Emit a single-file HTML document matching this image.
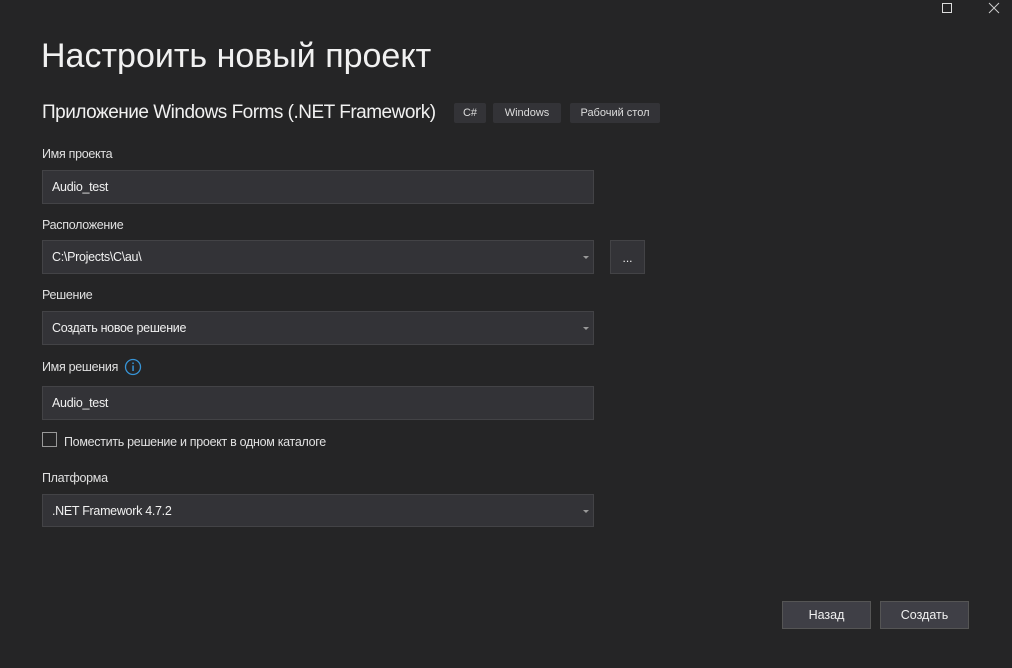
<!DOCTYPE html>
<html><head><meta charset="utf-8"><style>
*{margin:0;padding:0;box-sizing:border-box}
body{width:1012px;height:668px;background:#252526;color:#f1f1f1;font-family:"Liberation Sans",sans-serif;position:relative;overflow:hidden}
.a{position:absolute;white-space:nowrap}
.lbl{font-size:12.5px;color:#e0e0e0;letter-spacing:-0.3px}
.inp{position:absolute;left:42px;width:552px;height:34px;background:#333337;border:1px solid #434346;font-size:12.5px;color:#f1f1f1;padding:0 0 0 9px;line-height:32px;letter-spacing:-0.3px}
.arr{position:absolute;right:4px;top:15px;width:0;height:0;border-left:3px solid transparent;border-right:3px solid transparent;border-top:3px solid #999}
.tag{position:absolute;top:103px;height:20px;background:#333337;border-radius:2px;font-size:11px;line-height:20px;text-align:center;color:#ddd}
.btn{position:absolute;top:601px;width:89px;height:28px;background:#3f3f46;border:1px solid #555;font-size:12.5px;line-height:26px;text-align:center;color:#f1f1f1}
</style></head><body>
<div class="a" style="left:942px;top:3px;width:10px;height:10px;border:1px solid #ddd"></div>
<svg class="a" style="left:988px;top:2px" width="12" height="12"><path d="M1 1L11 11M11 1L1 11" stroke="#ccc" stroke-width="1"/></svg>
<div class="a" style="left:41px;top:37px;font-size:34px;letter-spacing:0px;color:#f1f1f1">Настроить новый проект</div>
<div class="a" style="left:42px;top:102px;font-size:19px;letter-spacing:-0.5px">Приложение Windows Forms (.NET Framework)</div>
<div class="tag" style="left:454px;width:32px">C#</div>
<div class="tag" style="left:493px;width:68px">Windows</div>
<div class="tag" style="left:570px;width:90px">Рабочий стол</div>
<div class="a lbl" style="left:42px;top:147px">Имя проекта</div>
<div class="inp" style="top:170px">Audio_test</div>
<div class="a lbl" style="left:42px;top:218px">Расположение</div>
<div class="inp" style="top:240px">C:\Projects\C\au\<div class="arr"></div></div>
<div class="a" style="left:610px;top:240px;width:35px;height:34px;background:#333337;border:1px solid #434346;text-align:center;font-size:12px;line-height:34px">...</div>
<div class="a lbl" style="left:42px;top:288px">Решение</div>
<div class="inp" style="top:311px">Создать новое решение<div class="arr"></div></div>
<div class="a lbl" style="left:42px;top:360px">Имя решения</div>
<svg class="a" style="left:124px;top:358px" width="18" height="18"><circle cx="9" cy="9" r="7.5" fill="none" stroke="#3794d6" stroke-width="1.3"/><rect x="8.3" y="7.5" width="1.5" height="5.5" fill="#3794d6"/><rect x="8.3" y="4.5" width="1.5" height="1.5" fill="#3794d6"/></svg>
<div class="inp" style="top:386px">Audio_test</div>
<div class="a" style="left:42px;top:432px;width:15px;height:15px;border:1px solid #999"></div>
<div class="a lbl" style="left:64px;top:435px">Поместить решение и проект в одном каталоге</div>
<div class="a lbl" style="left:42px;top:471px">Платформа</div>
<div class="inp" style="top:494px;height:33px">.NET Framework 4.7.2<div class="arr"></div></div>
<div class="btn" style="left:782px">Назад</div>
<div class="btn" style="left:880px">Создать</div>
</body></html>
